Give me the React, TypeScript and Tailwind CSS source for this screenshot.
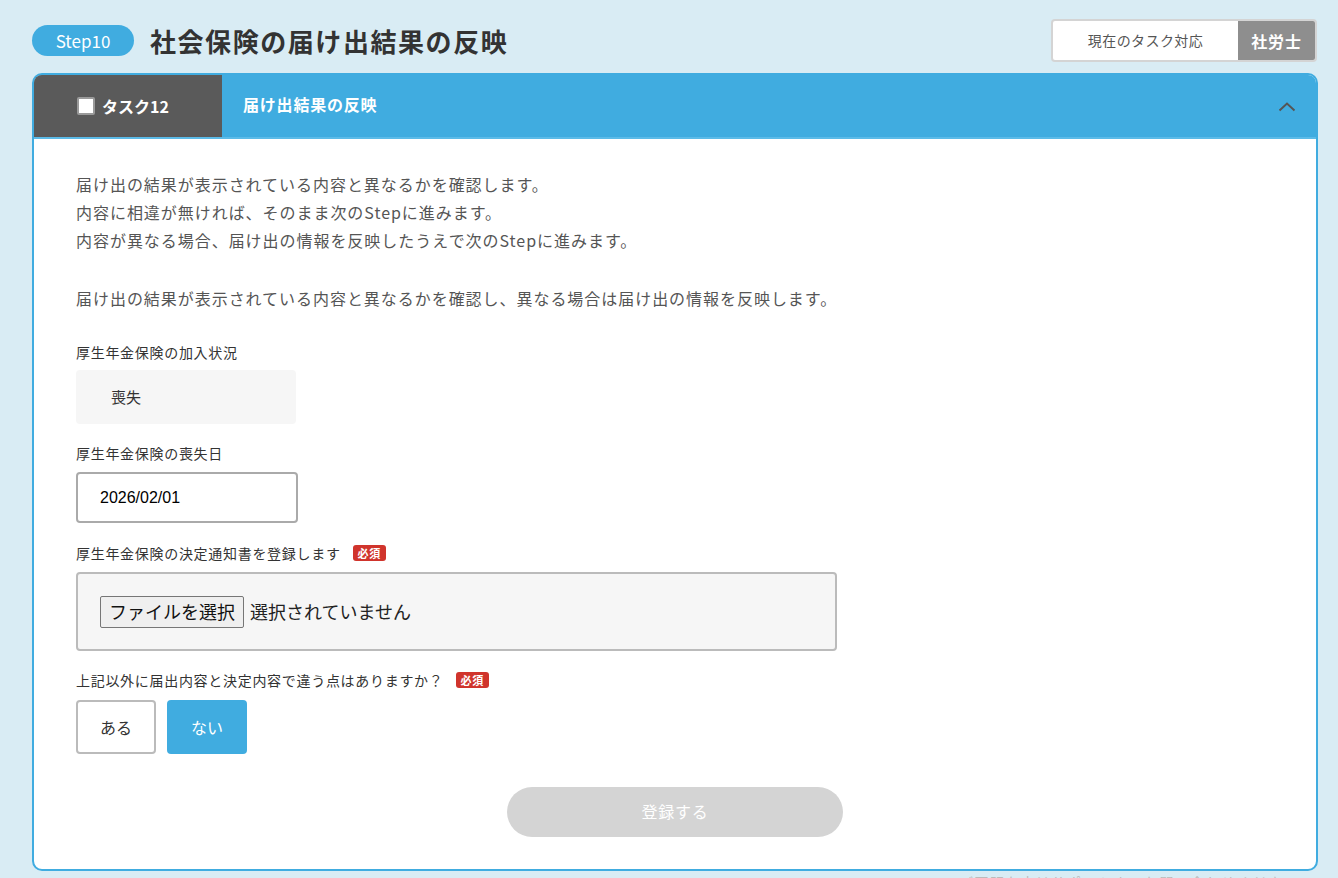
import React, { useState } from 'react';

const JP = "font-['Noto_Sans_CJK_JP','Noto_Sans',sans-serif]";

const Required = () => (
  <span className="ml-[12px] inline-flex h-[16px] items-center rounded-[3px] bg-[#d0342c] px-[5px] text-[11px] font-bold leading-none text-white">
    必須
  </span>
);

const Label: React.FC<{ children: React.ReactNode; required?: boolean }> = ({ children, required }) => (
  <div className="flex h-[20px] items-center text-[14px] tracking-[0.05em] text-[#333]">
    {children}
    {required && <Required />}
  </div>
);

export default function App() {
  const [diff, setDiff] = useState<'yes' | 'no'>('no');
  const [date, setDate] = useState('2026/02/01');

  return (
    <div className={`min-h-[878px] overflow-hidden bg-[#d9ecf4] ${JP}`}>
      {/* page title row */}
      <div className="flex items-start justify-between pl-[32px] pr-[21px] pt-[19px]">
        <div className="flex items-center pt-[6px]">
          <span className="flex h-[31px] w-[102px] items-center justify-center rounded-full bg-[#40ace0] text-[17px] leading-none text-white">
            Step10
          </span>
          <h1 className="ml-[16px] text-[26px] font-bold leading-[31px] tracking-[0.06em] text-[#333]">
            社会保険の届け出結果の反映
          </h1>
        </div>
        <div className="flex h-[43px] overflow-hidden rounded-[4px] border-2 border-[#d4d4d4] bg-white">
          <div className="flex w-[185px] items-center justify-center text-[14px] tracking-[0.03em] text-[#555]">
            現在のタスク対応
          </div>
          <div className="flex w-[77px] items-center justify-center bg-[#8e8e8e] text-[16px] font-bold tracking-[0.05em] text-white">
            社労士
          </div>
        </div>
      </div>

      {/* task card */}
      <div className="ml-[32px] mt-[11px] w-[1286px] overflow-hidden rounded-[10px] border-2 border-[#40ace0] bg-white">
        <div className="flex h-[64px] border-b-2 border-[#5cbbe8] bg-[#40ace0]">
          <div className="flex w-[188px] items-center bg-[#5a5a5a] pl-[43px]">
            <span className="h-[18px] w-[18px] rounded-[2px] border-2 border-[#9a9a9a] bg-white" />
            <span className="ml-[7px] text-[16px] font-bold text-white">タスク12</span>
          </div>
          <div className="flex flex-1 items-center pl-[21px] pr-[20px]">
            <span className="flex-1 pb-[4px] text-[16px] font-bold tracking-[0.05em] text-white">届け出結果の反映</span>
            <svg width="18" height="10" viewBox="0 0 18 10" fill="none" className="mt-[2px]">
              <path d="M1.5 8.5 L9 1.5 L16.5 8.5" stroke="#555" strokeWidth="2" />
            </svg>
          </div>
        </div>

        <div className="px-[42px] pb-[32px] pt-[31px]">
          <div className="text-[16px] leading-[28px] tracking-[0.06em] text-[#555]">
            <p>届け出の結果が表示されている内容と異なるかを確認します。</p>
            <p>内容に相違が無ければ、そのまま次のStepに進みます。</p>
            <p>内容が異なる場合、届け出の情報を反映したうえで次のStepに進みます。</p>
            <p className="h-[30px]">&nbsp;</p>
            <p>届け出の結果が表示されている内容と異なるかを確認し、異なる場合は届け出の情報を反映します。</p>
          </div>

          <div className="mt-[30px]">
            <Label>厚生年金保険の加入状況</Label>
            <div className="mt-[8px] flex h-[54px] w-[220px] items-center rounded-[4px] bg-[#f6f6f6] pl-[35px] text-[15px] text-[#333]">
              喪失
            </div>
          </div>

          <div className="mt-[19px]">
            <Label>厚生年金保険の喪失日</Label>
            <input
              value={date}
              onChange={(e) => setDate(e.target.value)}
              className="mt-[9px] block h-[51px] w-[222px] rounded-[4px] border-2 border-[#aaa] bg-white pl-[22px] font-['Liberation_Sans',sans-serif] text-[16px] text-black outline-none"
            />
          </div>

          <div className="mt-[20px]">
            <Label required>厚生年金保険の決定通知書を登録します</Label>
            <div className="mt-[9px] flex h-[79px] w-[761px] items-center rounded-[4px] border-2 border-[#bbb] bg-[#f6f6f6] pl-[22px]">
              <button className="flex h-[32px] items-center rounded-[2px] border border-[#767676] bg-[#efefef] px-[8px] text-[18px] text-[#111]">
                ファイルを選択
              </button>
              <span className="ml-[6px] text-[18px] text-[#222]">選択されていません</span>
            </div>
          </div>

          <div className="mt-[19px]">
            <Label required>上記以外に届出内容と決定内容で違う点はありますか？</Label>
            <div className="mt-[10px] flex gap-[11px]">
              <button
                onClick={() => setDiff('yes')}
                className={`h-[54px] w-[80px] rounded-[4px] text-[16px] ${
                  diff === 'yes' ? 'bg-[#40ace0] text-white' : 'border-2 border-[#bbb] bg-white text-[#333]'
                }`}
              >
                ある
              </button>
              <button
                onClick={() => setDiff('no')}
                className={`h-[54px] w-[80px] rounded-[4px] text-[16px] ${
                  diff === 'no' ? 'bg-[#40ace0] text-white' : 'border-2 border-[#bbb] bg-white text-[#333]'
                }`}
              >
                ない
              </button>
            </div>
          </div>

          <div className="mt-[33px] flex justify-center">
            <button disabled className="h-[50px] w-[336px] rounded-full bg-[#d4d4d4] pb-[2px] text-[16px] tracking-[0.05em] text-white">
              登録する
            </button>
          </div>
        </div>
      </div>

      <div className="mt-[1px] pr-[40px] text-right text-[14px] tracking-[0.1em] text-[#bbb]">
        ご不明な点はサポートまでお問い合わせください
      </div>
    </div>
  );
}
